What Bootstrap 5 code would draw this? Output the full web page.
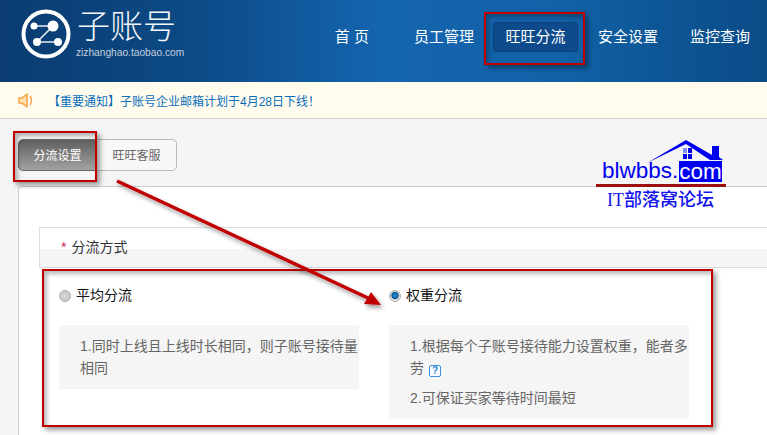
<!DOCTYPE html>
<html lang="zh">
<head>
<meta charset="utf-8">
<title>子账号</title>
<link href="https://cdn.jsdelivr.net/npm/bootstrap@5.3.0/dist/css/bootstrap.min.css" rel="stylesheet">
<style>
html,body{height:435px;overflow:hidden}
body{background:#f5f5f5;font-family:"Liberation Sans","Noto Sans CJK SC",sans-serif;font-size:14px;position:relative;width:767px}
.top-head{height:82px;background:linear-gradient(90deg,#0a3c70 0,#0c4a86 25%,#1465af 50%,#1262a8 72%,#0c5391 90%,#0b4c88 100%);padding:0 17px 0 21px;color:#fff}
.logo-ring{width:56px;height:56px;flex:none;margin-top:6px;margin-bottom:20px}
.logo-words{width:110px}
.logo-title{font-size:33px;line-height:34px;font-weight:300;letter-spacing:0;color:#f4f7fa;margin-top:10px}
.logo-sub{font-size:10.2px;line-height:13px;color:#c3d0de;margin-top:2px;margin-left:-1px}
.menu-row{margin-left:auto;margin-top:22px;height:30px;font-size:15px;line-height:30px}
.menu-row a{color:#fff;text-decoration:none;display:block;white-space:nowrap}
.menu-first{margin-right:45px}
.menu-two{margin-right:19px}
.menu-active{background:#0d4b8c;border:1px solid #0b4178;border-radius:3px;width:85px;height:30px;text-align:center;line-height:28px;margin-right:20px}
.menu-four{margin-right:32px}
.notice-bar{height:37px;background:#fffbed;border-bottom:1px solid #cfcfcf;padding-left:18px;font-size:12px;color:#0a6ebd}
.notice-bar span{margin-left:12px;padding-top:3px;white-space:nowrap}
.tab-row{padding:20px 0 0 18px;height:67px}
.tab-item{height:32px;line-height:32px;font-size:12px;text-align:center;border:1px solid #bbb}
.tab-on{width:79px;border-radius:5px 0 0 5px;border-color:#666;color:#fff;background:linear-gradient(180deg,#5f5f5f,#a2a2a2)}
.tab-off{width:80px;border-radius:0 5px 5px 0;border-left:0;color:#666;background:#f7f7f7}
.main-panel{margin-left:18px;background:#fff;border:1px solid #ccc;border-right:0;border-bottom:0;border-top-left-radius:4px;height:250px;padding:40px 0 0 20px}
.section-head{height:41px;border:1px solid #ddd;border-right:0;background:linear-gradient(180deg,#fff 0,#fff 53%,#f5f5f5 53%);padding-left:21px;line-height:38px;color:#333;font-size:14px}
.section-head b{color:#c5265a;font-weight:400;margin-right:5px}
.opt-row{padding:19px 0 0 20px;gap:30px}
.opt-col{width:300px}
.opt-label{height:17px;line-height:17px;color:#111;font-size:14px}
.fake-radio{width:12px;height:12px;border-radius:50%;flex:none;margin-right:5px;border:1px solid #aaa;background:radial-gradient(circle,#ddd 0,#c8c8c8 55%,#eee 100%)}
.fake-radio-on{background:radial-gradient(circle at 50% 45%,#2a8fd0 0,#0a5b9a 45%,#dfdfdf 55%,#eee 100%)}
.opt-note{background:#f5f5f5;margin-top:21px;padding:10px 0 10px 21px;font-size:14px;line-height:22px;color:#666}
.opt-note p{margin:0}
.opt-note .ln-two{margin-top:8px}
.tip-q{display:inline-block;width:12px;height:12px;border:1px solid #3b8fe0;border-radius:2px;color:#2a7fd8;font-size:10px;font-weight:700;font-style:normal;line-height:10px;text-align:center;margin-left:5px;background:#fff;vertical-align:-1px}
.mark-box{position:absolute;border:2px solid #c00000;box-shadow:3px 3px 5px rgba(0,0,0,.4),inset 3px 3px 4px rgba(0,0,0,.28);pointer-events:none}
.mark-nav{left:484px;top:12px;width:101px;height:53px}
.mark-tab{left:13px;top:131px;width:84px;height:51px}
.mark-opts{left:42px;top:269px;width:671px;height:158px}
.arrow-svg{position:absolute;left:100px;top:170px;width:300px;height:150px}
.stamp{position:absolute;left:596px;top:140px;width:132px;height:70px;color:#0000f0}
.stamp-word{position:absolute;left:6px;top:16px;font-size:22.500px;line-height:30px;white-space:nowrap}
.stamp-com{background:#0000f0;color:#fff;display:inline-block;line-height:21px;height:21px;margin-left:1px;vertical-align:-1px}
.stamp-line{position:absolute;left:0;top:44px;width:130px;height:3px;background:#9c1010}
.stamp-cn{position:absolute;left:11px;top:48px;font-size:18px;line-height:24px;font-family:"Liberation Serif","Noto Sans CJK SC",serif;white-space:nowrap;font-weight:500;color:#1414ee}
</style>
</head>
<body>
<header class="top-head d-flex">
  <svg class="logo-ring" viewBox="0 0 56 56"><circle cx="25" cy="28" r="22.500" fill="none" stroke="#fff" stroke-width="4"/><path d="M13 20H32L16 36H37" stroke="#fff" stroke-width="1.500" fill="none" opacity=".9"/><circle cx="13" cy="20" r="3.500" fill="#fff"/><circle cx="32" cy="20" r="5.500" fill="#fff"/><circle cx="16" cy="36" r="4" fill="#fff"/><circle cx="37" cy="36" r="4" fill="#fff"/></svg>
  <div class="logo-words">
    <div class="logo-title">子账号</div>
    <div class="logo-sub">zizhanghao.taobao.com</div>
  </div>
  <nav class="menu-row d-flex">
    <a class="menu-first" href="#">首 页</a>
    <a class="menu-two" href="#">员工管理</a>
    <a class="menu-active" href="#">旺旺分流</a>
    <a class="menu-four" href="#">安全设置</a>
    <a href="#">监控查询</a>
  </nav>
</header>
<div class="notice-bar d-flex align-items-center">
  <svg width="18" height="15" viewBox="0 0 18 15"><path d="M1 5H4L9 1.500V13.500L4 10H1Z" fill="#fde3b8" stroke="#f8a548" stroke-width="1.600"/><path d="M12 3Q15 7.500 12 12" fill="none" stroke="#f8a548" stroke-width="1.400"/></svg>
  <span>【重要通知】子账号企业邮箱计划于4月28日下线！</span>
</div>
<div class="tab-row d-flex">
  <div class="tab-item tab-on">分流设置</div>
  <div class="tab-item tab-off">旺旺客服</div>
</div>
<main class="main-panel">
  <div class="section-head"><b>*</b>分流方式</div>
  <div class="opt-row d-flex">
    <div class="opt-col">
      <div class="opt-label d-flex align-items-center"><i class="fake-radio"></i>平均分流</div>
      <div class="opt-note"><p>1.同时上线且上线时长相同，则子账号接待量相同</p></div>
    </div>
    <div class="opt-col">
      <div class="opt-label d-flex align-items-center"><i class="fake-radio fake-radio-on"></i>权重分流</div>
      <div class="opt-note"><p>1.根据每个子账号接待能力设置权重，能者多</p><p>劳<i class="tip-q">?</i></p><p class="ln-two">2.可保证买家等待时间最短</p></div>
    </div>
  </div>
</main>
<div class="stamp">
  <svg width="132" height="30" viewBox="0 0 132 30" class="position-absolute top-0 start-0"><path d="M51 23L90 0L116 15V6H123V17L127 20H114L90 4Z" fill="#0000f0"/><rect x="87" y="8" width="4" height="5" fill="#8090ff"/><rect x="92" y="8" width="4" height="5" fill="#0000f0"/><rect x="87" y="14" width="4" height="5" fill="#0000f0"/><rect x="92" y="14" width="4" height="5" fill="#0000f0"/></svg>
  <div class="stamp-word">blwbbs.<span class="stamp-com">com</span></div>
  <div class="stamp-line"></div>
  <div class="stamp-cn">IT部落窝论坛</div>
</div>
<div class="mark-box mark-nav"></div>
<div class="mark-box mark-tab"></div>
<div class="mark-box mark-opts"></div>
<svg class="arrow-svg" viewBox="0 0 300 150"><defs><filter id="sh" x="-10%" y="-10%" width="120%" height="130%"><feDropShadow dx="2" dy="3" stdDeviation="2" flood-color="#000" flood-opacity=".4"/></filter></defs><g filter="url(#sh)"><path d="M17 11L268 128" stroke="#c00000" stroke-width="3.500"/><path d="M281 135L264 134L271 122Z" fill="#c00000"/></g></svg>
</body>
</html>
